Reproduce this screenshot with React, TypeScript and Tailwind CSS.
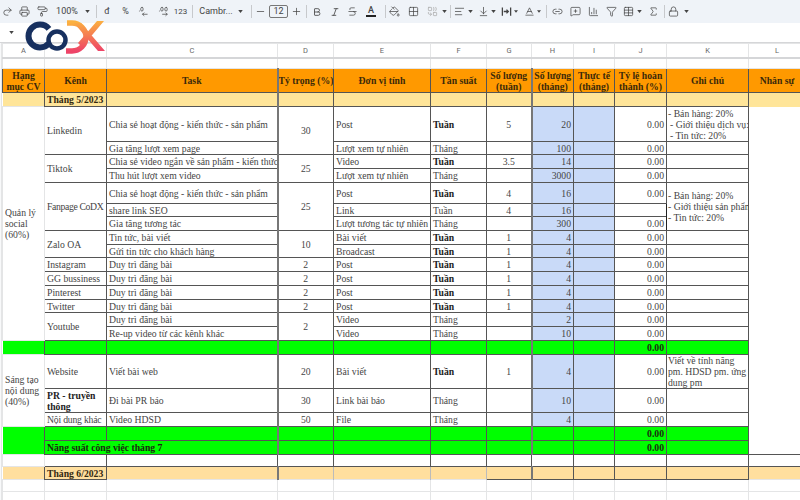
import {
  Baseline,
  Bold,
  ChartColumn,
  Combine,
  DecimalsArrowLeft,
  DecimalsArrowRight,
  Funnel,
  Grid2x2,
  Italic,
  Link2,
  Lock,
  MessageSquarePlus,
  Minus,
  PaintBucket,
  PaintRoller,
  Plus,
  Printer,
  Redo2,
  Sigma,
  Strikethrough,
  Table,
  AlignLeft,
  ArrowDownToLine,
} from "lucide-react";
import type { ReactNode } from "react";

// one row of the sheet; null in b or d means the cell above spans over it
interface SheetRow {
  h: string;
  a?: { lines: string[]; span: number };
  b: string | null;
  bSpan?: number;
  bClass?: string;
  task: string;
  d: string | null;
  dSpan?: number;
  unit: string;
  freq: string;
  week?: string;
  month: string;
  done?: string;
  note?: string[] | null;
  noteSpan?: number;
}

const social: SheetRow[] = [
  { h: "h-[35px]", a: { lines: ["Quản lý", "social", "(60%)"], span: 15 }, b: "Linkedin", bSpan: 2, task: "Chia sẻ hoạt động - kiến thức - sản phẩm", d: "30", dSpan: 2, unit: "Post", freq: "Tuần", week: "5", month: "20", done: "0.00", note: ["- Bán hàng: 20%", " - Giới thiệu dịch vụ:", " - Tin tức: 20%"] },
  { h: "h-[13px]", b: null, task: "Gia tăng lượt xem page", d: null, unit: "Lượt xem tự nhiên", freq: "Tháng", month: "100", done: "0.00" },
  { h: "h-[14px]", b: "Tiktok", bSpan: 2, task: "Chia sẻ video ngắn về sản phẩm - kiến thức", d: "25", dSpan: 2, unit: "Video", freq: "Tuần", week: "3.5", month: "14", done: "0.00" },
  { h: "h-[14px]", b: null, task: "Thu hút lượt xem video", d: null, unit: "Lượt xem tự nhiên", freq: "Tháng", month: "3000", done: "0.00" },
  { h: "h-[21px]", b: "Fanpage CoDX", bSpan: 3, bClass: "whitespace-nowrap tracking-[-0.35px]", task: "Chia sẻ hoạt động - kiến thức - sản phẩm", d: "25", dSpan: 3, unit: "Post", freq: "Tuần", week: "4", month: "16", done: "0.00", note: ["- Bán hàng: 20%", "- Giới thiệu sản phẩm", "- Tin tức: 20%"], noteSpan: 3 },
  { h: "h-[13px]", b: null, task: "share link SEO", d: null, unit: "Link", freq: "Tuần*", week: "4", month: "16", note: null },
  { h: "h-[14px]", b: null, task: "Gia tăng tương tác", d: null, unit: "Lượt tương tác tự nhiên", freq: "Tháng", month: "300", done: "0.00", note: null },
  { h: "h-[14px]", b: "Zalo OA", bSpan: 2, task: "Tin tức, bài viết", d: "10", dSpan: 2, unit: "Bài viết", freq: "Tuần", week: "1", month: "4", done: "0.00" },
  { h: "h-[13px]", b: null, task: "Gửi tin tức cho khách hàng", d: null, unit: "Broadcast", freq: "Tuần", week: "1", month: "4", done: "0.00" },
  { h: "h-[14px]", b: "Instagram", task: "Duy trì đăng bài", d: "2", unit: "Post", freq: "Tuần", week: "1", month: "4", done: "0.00" },
  { h: "h-[14px]", b: "GG bussiness", task: "Duy trì đăng bài", d: "2", unit: "Post", freq: "Tuần", week: "1", month: "4", done: "0.00" },
  { h: "h-[14px]", b: "Pinterest", task: "Duy trì đăng bài", d: "2", unit: "Post", freq: "Tuần", week: "1", month: "4", done: "0.00" },
  { h: "h-[13px]", b: "Twitter", task: "Duy trì đăng bài", d: "2", unit: "Post", freq: "Tuần", week: "1", month: "4", done: "0.00" },
  { h: "h-[14px]", b: "Youtube", bSpan: 2, task: "Duy trì đăng bài", d: "2", dSpan: 2, unit: "Video", freq: "Tháng", month: "2", done: "0.00" },
  { h: "h-[14px]", b: null, task: "Re-up video từ các kênh khác", d: null, unit: "Video", freq: "Tháng", month: "10", done: "0.00" },
];

const content: SheetRow[] = [
  { h: "h-[34px]", a: { lines: ["Sáng tạo", "nội dung", "(40%)"], span: 3 }, b: "Website", task: "Viết bài web", d: "20", unit: "Bài viết", freq: "Tuần", week: "1", month: "4", done: "0.00", note: ["Viết về tính năng", "pm. HDSD pm. ứng", "dung pm"] },
  { h: "h-[24px]", b: "PR - truyền thông", bClass: "font-bold text-[#222]", task: "Đi bài PR báo", d: "30", unit: "Link bài báo", freq: "Tháng", month: "10", done: "0.00" },
  { h: "h-[14px]", b: "Nội dung khác", bClass: "whitespace-nowrap tracking-[-0.2px]", task: "Video HDSD", d: "50", unit: "File", freq: "Tháng", month: "4", done: "0.00" },
];

const line = "border border-[#555]";
const grid = "border border-[#e4e5e6]";
const pad = "px-[2px] py-0 overflow-hidden whitespace-nowrap";
const thick = "border-l-2 border-l-[#777]";
const black = "border-l-[#222]";

function Caret() {
  return (
    <svg viewBox="0 0 6 4" className="w-[5px] h-[3px] fill-[#444]">
      <path d="M0 0h6L3 4z" />
    </svg>
  );
}

function Tool({ w, children }: { w: string; children: ReactNode }) {
  return <div className={`${w} h-full flex items-center justify-center shrink-0`}>{children}</div>;
}

function Sep({ ml }: { ml: string }) {
  return <div className={`${ml} w-px h-[13px] bg-[#c7c9cc] shrink-0`} />;
}

function Toolbar() {
  const ic = { size: 11, strokeWidth: 1.6 };
  return (
    <div className="h-[23px] bg-[#eff3f8] flex items-center text-[#444] font-['Roboto'] text-[9px]">
      <Tool w="w-[14px]"><Redo2 {...ic} /></Tool>
      <Tool w="w-[20px]"><Printer {...ic} /></Tool>
      <Tool w="w-[16px]"><PaintRoller {...ic} /></Tool>
      <Tool w="w-[34px]">100%</Tool>
      <Tool w="w-[6px]"><Caret /></Tool>
      <Sep ml="ml-[6px]" />
      <Tool w="w-[20px]">đ</Tool>
      <Tool w="w-[17px]">%</Tool>
      <Tool w="w-[19px]"><DecimalsArrowLeft {...ic} /></Tool>
      <Tool w="w-[20px]"><DecimalsArrowRight {...ic} /></Tool>
      <Tool w="w-[15px]"><span className="text-[8px]">123</span></Tool>
      <Sep ml="ml-[4px]" />
      <Tool w="w-[43px]"><span className="pl-[3px]">Cambr...</span></Tool>
      <Tool w="w-[8px]"><Caret /></Tool>
      <Sep ml="ml-[7px]" />
      <Tool w="w-[16px]"><Minus {...ic} /></Tool>
      <div className="ml-px w-[19px] h-[13px] border border-[#777] rounded-[2px] flex items-center justify-center shrink-0">12</div>
      <Tool w="w-[16px]"><Plus {...ic} /></Tool>
      <Sep ml="ml-[2px]" />
      <Tool w="w-[20px]"><Bold size={10} strokeWidth={2} /></Tool>
      <Tool w="w-[16px]"><Italic size={10} strokeWidth={2} /></Tool>
      <Tool w="w-[18px]"><Strikethrough {...ic} /></Tool>
      <Tool w="w-[20px]">
        <span className="font-medium text-[9px] leading-[9px] border-b-2 border-[#222] px-[2px]">A</span>
      </Tool>
      <Sep ml="ml-[4px]" />
      <Tool w="w-[16px]"><PaintBucket {...ic} /></Tool>
      <Tool w="w-[22px]"><Grid2x2 {...ic} /></Tool>
      <Tool w="w-[16px]"><Combine size={11} strokeWidth={1.6} className="text-[#aaa]" /></Tool>
      <Tool w="w-[8px]"><Caret /></Tool>
      <Sep ml="ml-[2px]" />
      <Tool w="w-[16px]"><AlignLeft {...ic} /></Tool>
      <Tool w="w-[6px]"><Caret /></Tool>
      <div className="ml-[2px] w-[16px] flex justify-center shrink-0"><ArrowDownToLine {...ic} /></div>
      <Tool w="w-[5px]"><Caret /></Tool>
      <div className="ml-[2px] w-[16px] flex justify-center shrink-0">
        <svg viewBox="0 0 12 12" className="w-[11px] h-[11px] fill-none stroke-[#444] stroke-[1.4]">
          <path d="M1.5 1.5v9M10.5 1.5v9M3 6h5M6 4l2 2-2 2" />
        </svg>
      </div>
      <Tool w="w-[4px]"><Caret /></Tool>
      <div className="ml-[3px] w-[16px] flex justify-center shrink-0"><Baseline {...ic} /></div>
      <Tool w="w-[4px]"><Caret /></Tool>
      <Sep ml="ml-[5px]" />
      <Tool w="w-[20px]"><Link2 {...ic} /></Tool>
      <Tool w="w-[16px]"><MessageSquarePlus {...ic} /></Tool>
      <div className="ml-[2px] w-[16px] flex justify-center shrink-0"><ChartColumn {...ic} /></div>
      <div className="ml-[2px] w-[16px] flex justify-center shrink-0"><Funnel {...ic} /></div>
      <div className="ml-px w-[16px] flex justify-center shrink-0"><Table {...ic} /></div>
      <Tool w="w-[6px]"><Caret /></Tool>
      <div className="ml-[3px] w-[16px] flex justify-center shrink-0"><Sigma {...ic} /></div>
      <Sep ml="ml-[3px]" />
      <Tool w="w-[16px]"><Lock {...ic} /></Tool>
      <div className="ml-[2px] w-[6px] flex justify-center shrink-0"><Caret /></div>
    </div>
  );
}

// logo sits over the formula bar and the column letters
function Logo() {
  return (
    <svg viewBox="0 0 110 34" className="absolute left-0 top-[20px] w-[110px] h-[34px]">
      <defs>
        <linearGradient id="dx" x1="0" y1="0" x2="0" y2="1">
          <stop offset="0" stopColor="#fbb040" />
          <stop offset="1" stopColor="#ee4468" />
        </linearGradient>
      </defs>
      <circle cx="40" cy="16" r="11.5" fill="none" stroke="#17305f" strokeWidth="6" strokeDasharray="56 17" strokeDashoffset="-8" />
      <circle cx="57" cy="20" r="8.5" fill="none" stroke="#17305f" strokeWidth="4.5" />
      <path d="M67 3h5a14 14 0 0 1 0 28h-6" fill="none" stroke="url(#dx)" strokeWidth="5.5" />
      <path d="M81 3l24 28h-7L74 3zM104 1L82 27l-4-4L97 1z" fill="url(#dx)" />
    </svg>
  );
}

function Row({ r }: { r: SheetRow }) {
  const freq = r.freq.replace("*", "");
  const boldFreq = r.freq === "Tuần";
  return (
    <tr className={r.h}>
      {r.a && (
        <td rowSpan={r.a.span} className={`${grid} ${pad} bg-white text-[#444]`}>
          {r.a.lines.map((t) => (
            <div key={t}>{t}</div>
          ))}
        </td>
      )}
      {r.b !== null && (
        <td rowSpan={r.bSpan} className={`${line} px-[2px] py-0 overflow-hidden ${r.bClass ?? "whitespace-nowrap"}`}>
          {r.b}
        </td>
      )}
      <td className={`${line} ${black} ${pad}`}>{r.task}</td>
      {r.d !== null && (
        <td rowSpan={r.dSpan} className={`${line} ${thick} ${pad} text-center`}>
          {r.d}
        </td>
      )}
      <td className={`${line} ${pad}`}>{r.unit}</td>
      <td className={`${line} ${pad} ${boldFreq ? "font-bold text-[#222]" : ""}`}>{freq}</td>
      <td className={`${line} ${pad} text-center`}>{r.week}</td>
      <td className={`${line} ${thick} ${pad} text-right bg-[#c9daf8]`}>{r.month}</td>
      <td className={`${line} ${pad} bg-[#c9daf8]`} />
      <td className={`${line} ${pad} text-right`}>{r.done}</td>
      {r.note !== null && (
        <td rowSpan={r.noteSpan} className={`${line} ${black} px-px py-0 overflow-hidden whitespace-nowrap`}>
          {r.note?.map((t) => (
            <div key={t} className={t.startsWith(" ") ? "pl-[2px]" : ""}>{t.trim()}</div>
          ))}
        </td>
      )}
      <td className="border-0" />
    </tr>
  );
}

function GreenRow({ label }: { label?: string }) {
  const g = `${line} ${pad} bg-[#00ff00]`;
  return (
    <tr className="h-[14px] font-bold text-[#1c2a10]">
      <td className={`${pad} bg-[#00ff00]`} />
      <td colSpan={label ? 2 : 1} className={g}>{label}</td>
      {!label && <td className={`${g} ${black}`} />}
      <td className={`${g} ${thick}`} />
      <td className={g} />
      <td className={g} />
      <td className={g} />
      <td className={`${g} ${thick}`} />
      <td className={g} />
      <td className={`${g} text-right`}>0.00</td>
      <td className={`${g} ${black}`} />
      <td className="border-0" />
    </tr>
  );
}

function MonthRow({ label, h, last }: { label: string; h: string; last?: boolean }) {
  const fill = last ? "bg-[#ffdf9e]" : "bg-[#ffe599]";
  const y = `${line} ${pad} ${fill}`;
  const open = last ? `border-x border-t border-x-[#bbb] border-t-[#555] ${pad} ${fill}` : y;
  return (
    <tr className={`${h} font-bold text-[#33280f]`}>
      <td className={`${pad} ${fill}`} />
      <td className={y}>{label}</td>
      <td className={`${open} ${black}`} />
      <td className={`${open} ${thick}`} />
      <td className={open} />
      <td className={open} />
      <td className={y} />
      <td className={`${y} ${thick}`} />
      <td className={y} />
      <td className={y} />
      <td className={`${y} ${black}`} />
      <td className={`${pad} ${fill} ${last ? "border-t border-t-[#555]" : ""}`} />
    </tr>
  );
}

const letters = ["A", "B", "C", "D", "E", "F", "G", "H", "I", "J", "K", "L"];
const heads = [
  ["Hạng", "mục CV"],
  ["Kênh"],
  ["Task"],
  ["Tỷ trọng (%)"],
  ["Đơn vị tính"],
  ["Tần suất"],
  ["Số lượng", "(tuần)"],
  ["Số lượng", "(tháng)"],
  ["Thực tế", "(tháng)"],
  ["Tỷ lệ hoàn", "thành (%)"],
  ["Ghi chú"],
  ["Nhân sự"],
];

export default function App() {
  return (
    <div className="relative w-[800px] h-[500px] overflow-hidden bg-white font-['Liberation_Serif',serif] text-[9.7px] leading-[11px] text-[#444]">
      <Toolbar />
      <div className="h-[20px] bg-white border-b border-[#d5d6d8] flex items-center pl-[9px]">
        <Caret />
      </div>
      <div className="flex">
        <div className="w-[2px] h-[457px] border-r border-[#e4e5e6] bg-[#f8f9fa] shrink-0" />
        <table className="table-fixed border-collapse w-[803px] shrink-0">
          <colgroup>
            <col className="w-[42px]" />
            <col className="w-[62px]" />
            <col className="w-[171px]" />
            <col className="w-[56px]" />
            <col className="w-[97px]" />
            <col className="w-[56px]" />
            <col className="w-[45px]" />
            <col className="w-[42px]" />
            <col className="w-[41px]" />
            <col className="w-[52px]" />
            <col className="w-[82px]" />
            <col className="w-[57px]" />
          </colgroup>
          <tbody>
            <tr className="h-[14px] font-['Roboto'] text-[7.5px] text-[#666]">
              {letters.map((l) => (
                <td key={l} className={`${grid} border-b-2 border-b-[#d5d6d8] p-0 text-center`}>{l}</td>
              ))}
            </tr>
            <tr className="h-[11px]">
              {letters.map((l) => (
                <td key={l} className={`${grid} p-0`} />
              ))}
            </tr>
            <tr className="h-[24px] font-bold text-[#3b2a0a] bg-[#ff9900]">
              {heads.map((t, i) => (
                <td key={t[0]} className={`${line} ${i === 3 || i === 7 ? thick : ""} ${i === 2 || i === 10 ? black : ""} px-0 py-0 text-center overflow-hidden whitespace-nowrap`}>
                  {t.map((s) => (
                    <div key={s}>{s}</div>
                  ))}
                </td>
              ))}
            </tr>
            <MonthRow label="Tháng 5/2023" h="h-[14px]" />
            {social.map((r, i) => (
              <Row key={i} r={r} />
            ))}
            <GreenRow />
            {content.map((r, i) => (
              <Row key={i} r={r} />
            ))}
            <GreenRow />
            <GreenRow label="Năng suất công việc tháng 7" />
            <tr className="h-[12px]">
              <td className={grid} />
              {letters.slice(1).map((l) => (
                <td key={l} className={line} />
              ))}
            </tr>
            <MonthRow label="Tháng 6/2023" h="h-[13px]" last />
            <tr className="h-[12px]">
              {letters.map((l) => (
                <td key={l} className={grid} />
              ))}
            </tr>
            <tr className="h-[12px]">
              {letters.map((l) => (
                <td key={l} className={grid} />
              ))}
            </tr>
          </tbody>
        </table>
      </div>
      <Logo />
    </div>
  );
}
